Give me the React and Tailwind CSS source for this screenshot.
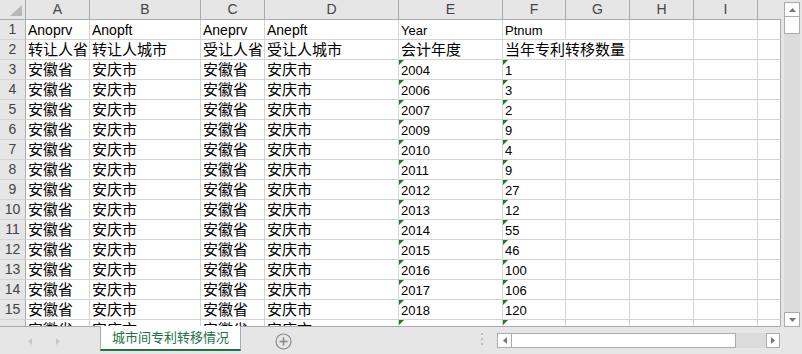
import React from "react";

const cols = [
  { w: "w-[64px]", l: "A" },
  { w: "w-[111px]", l: "B" },
  { w: "w-[64px]", l: "C" },
  { w: "w-[134px]", l: "D" },
  { w: "w-[104px]", l: "E" },
  { w: "w-[63px]", l: "F" },
  { w: "w-[64px]", l: "G" },
  { w: "w-[64px]", l: "H" },
  { w: "w-[64px]", l: "I" },
  { w: "w-[23px]", l: "" },
];

const years = ["2004", "2006", "2007", "2009", "2010", "2011", "2012", "2013", "2014", "2015", "2016", "2017", "2018", ""];
const nums = ["1", "3", "2", "9", "4", "9", "27", "12", "55", "46", "100", "106", "120", ""];

const rows = [
  { cells: ["Anoprv", "Anopft", "Aneprv", "Anepft", "Year", "Ptnum"], latin: true },
  { cells: ["转让人省", "转让人城市", "受让人省", "受让人城市", "会计年度", "当年专利转移数量"], overflowF: true },
  ...years.map((y, i) => ({
    cells: ["安徽省", "安庆市", "安徽省", "安庆市", y, nums[i]],
    tri: true,
  })),
];

const font = { fontFamily: '"Liberation Sans", "Noto Sans CJK SC", sans-serif' };

function GreenTri() {
  return (
    <svg className="absolute left-0 top-0" width="5" height="5" viewBox="0 0 5 5">
      <polygon points="0,0 5,0 0,5" fill="#1f7a1f" />
    </svg>
  );
}

function Row({ idx, row }) {
  return (
    <div className="flex h-[20px] shrink-0">
      <div className="w-[26px] shrink-0 h-full bg-[#e6e6e6] border-r border-b border-r-[#ababab] border-b-[#d4d4d4] flex items-center justify-center text-[14px] text-[#444]">
        {idx}
      </div>
      {cols.map((c, ci) => {
        const text = row.cells[ci] ?? "";
        const isNum = ci === 4 || ci === 5;
        const last = ci === cols.length - 1;
        const isOverflow = row.overflowF && ci === 5;
        const isChinese = !row.latin && !(isNum && row.tri);
        return (
          <div
            key={ci}
            className={`${c.w} shrink-0 h-full relative border-b border-[#d4d4d4] ${isOverflow ? "border-r-transparent border-r overflow-visible" : "border-r overflow-hidden"} ${last ? "border-r-[#ababab]" : ""} bg-transparent`}
          >
            {row.tri && isNum && <GreenTri />}
            <div
              className={`whitespace-nowrap pl-[2px] text-black ${isChinese ? "text-[15px] leading-[19px]" : isNum ? "text-[13px] leading-[20px] pt-[1px]" : "text-[14px] leading-[20px]"}`}
            >
              {text}
            </div>
          </div>
        );
      })}
    </div>
  );
}

function Tri({ dir, color = "#777" }) {
  const pts = {
    up: "0,4 7,4 3.5,0",
    down: "0,0 7,0 3.5,4",
    left: "4,0 4,7 0,3.5",
    right: "0,0 0,7 4,3.5",
  }[dir];
  const w = dir === "up" || dir === "down" ? 7 : 4;
  const h = dir === "up" || dir === "down" ? 4 : 7;
  return (
    <svg width={w} height={h} viewBox={`0 0 ${w} ${h}`}>
      <polygon points={pts} fill={color} />
    </svg>
  );
}

export default function App() {
  return (
    <div className="w-[802px] h-[354px] bg-[#e6e6e6] flex flex-col overflow-hidden" style={font}>
      <div className="flex h-[327px] shrink-0">
        <div className="w-[781px] shrink-0 flex flex-col h-[327px] bg-white border-b border-[#ababab]">
          {/* header row */}
          <div className="flex h-[20px] shrink-0 bg-[#e6e6e6] border-b border-[#ababab]">
            <div className="w-[26px] shrink-0 h-full border-r border-[#ababab] relative">
              <svg className="absolute left-[10px] top-[5px]" width="12" height="11" viewBox="0 0 12 11">
                <polygon points="12,0 12,11 0,11" fill="#b8b8b8" />
              </svg>
            </div>
            {cols.map((c, ci) => (
              <div
                key={ci}
                className={`${c.w} shrink-0 h-full border-r ${ci === cols.length - 1 ? "border-transparent" : "border-[#ababab]"} flex items-center justify-center text-[14px] text-[#444]`}
              >
                {c.l}
              </div>
            ))}
          </div>
          <div className="flex-1 overflow-hidden flex flex-col">
            {rows.map((r, i) => (
              <Row key={i} idx={i + 1 <= 15 ? i + 1 : ""} row={r} />
            ))}
          </div>
        </div>
        {/* vertical scrollbar */}
        <div className="ml-[3px] w-[16px] pt-[2px] flex flex-col h-[327px]">
          <div className="h-[15px] bg-white border border-[#ababab] flex items-center justify-center">
            <Tri dir="up" />
          </div>
          <div className="h-[17px] bg-white border border-t-0 border-[#ababab]" />
          <div className="flex-1 bg-[#dcdcdc]" />
          <div className="h-[15px] bg-white border border-[#ababab] flex items-center justify-center">
            <Tri dir="down" />
          </div>
        </div>
      </div>
      {/* bottom bar */}
      <div className="flex items-start h-[27px] shrink-0">
        <div className="w-[100px] shrink-0 flex items-center h-[27px] pl-[28px] pt-[1px]">
          <Tri dir="left" color="#c6c6c6" />
          <div className="ml-[24px]">
            <Tri dir="right" color="#c6c6c6" />
          </div>
        </div>
        <div className="w-[141px] h-[25px] -mt-px shrink-0 bg-white border-x border-[#ababab] border-b-2 border-b-[#217346] flex items-center justify-center text-[13px] text-[#217346] relative">
          城市间专利转移情况
        </div>
        <div className="ml-[34px] mt-[6px] shrink-0">
          <svg width="17" height="17" viewBox="0 0 17 17">
            <circle cx="8.5" cy="8.5" r="7.5" fill="none" stroke="#8a8a8a" strokeWidth="1.2" />
            <path d="M4.5 8.5H12.5M8.5 4.5V12.5" stroke="#8a8a8a" strokeWidth="1.6" />
          </svg>
        </div>
        <div className="ml-[189px] mt-[6px] flex flex-col gap-[3px] shrink-0">
          <div className="w-[2px] h-[2px] bg-[#c0c0c0]" />
          <div className="w-[2px] h-[2px] bg-[#c0c0c0]" />
          <div className="w-[2px] h-[2px] bg-[#c0c0c0]" />
        </div>
        <div className="ml-[14px] mt-[6px] w-[283px] h-[15px] flex shrink-0">
          <div className="w-[15px] h-full bg-white border border-[#ababab] flex items-center justify-center">
            <Tri dir="left" />
          </div>
          <div className="w-[224px] h-full bg-white border border-l-0 border-[#ababab]" />
          <div className="flex-1 h-full bg-[#dcdcdc]" />
          <div className="w-[14px] h-full bg-white border border-[#ababab] flex items-center justify-center">
            <Tri dir="right" />
          </div>
        </div>
      </div>
    </div>
  );
}
